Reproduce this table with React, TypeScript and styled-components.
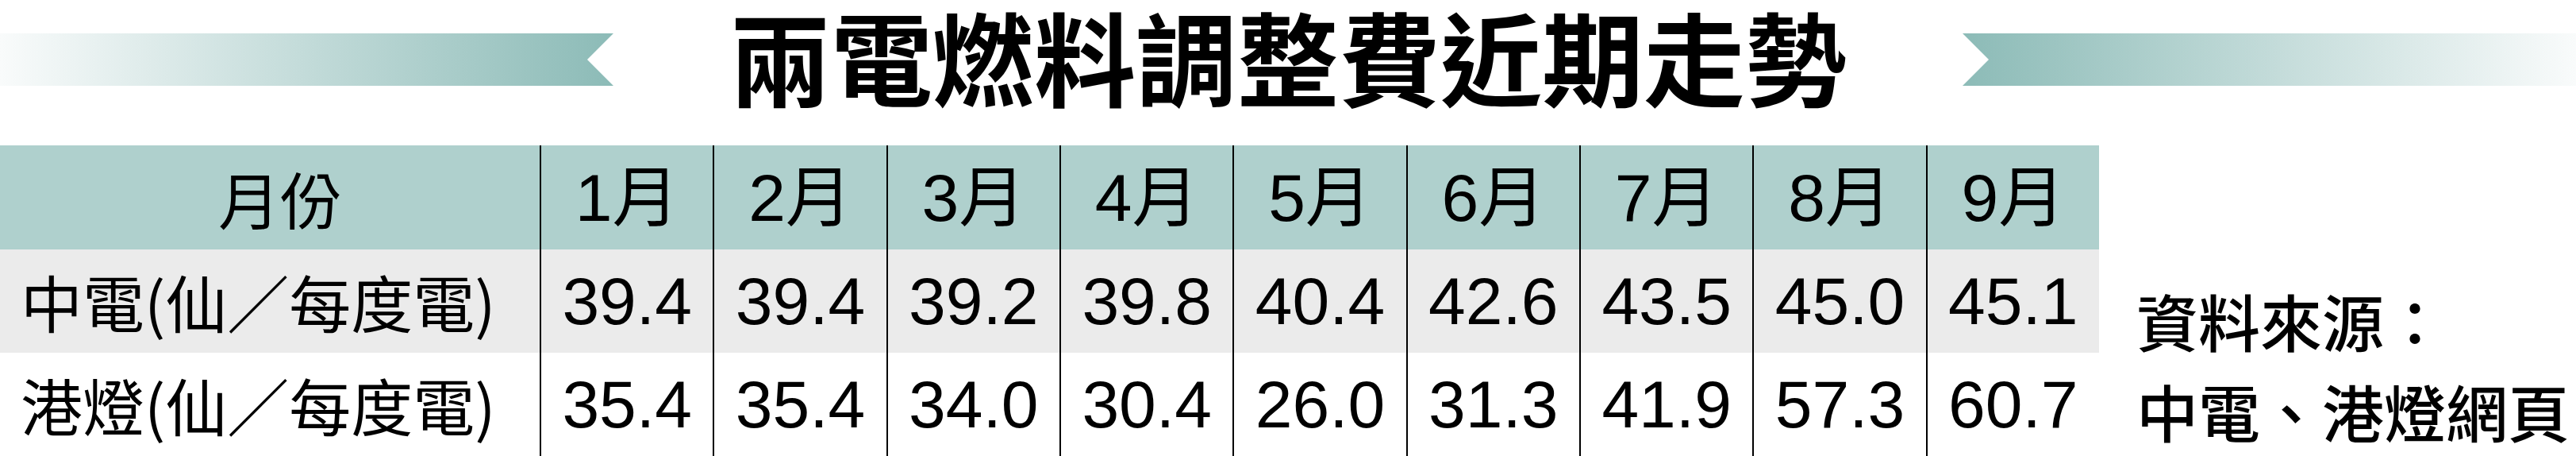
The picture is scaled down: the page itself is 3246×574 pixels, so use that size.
import React from 'react'
import styled, { createGlobalStyle } from 'styled-components'

const CJK = '"Noto Sans CJK TC", "Noto Sans CJK SC", sans-serif'
const NUM = '"Liberation Sans", "Noto Sans CJK TC", sans-serif'

const GlobalStyle = createGlobalStyle`
  html, body {
    margin: 0;
    padding: 0;
    background: #ffffff;
  }
  body {
    font-family: ${CJK};
    color: #000000;
  }
`

const Page = styled('div')`
  width: 3246px;
  height: 574px;
  display: flex;
  flex-direction: column;
`

const TitleRow = styled('div')`
  height: 183px;
  display: grid;
  grid-template-columns: 1fr auto 1fr;
  column-gap: 146px;
  align-items: start;
`

const Ribbon = styled('div')<{ $side: 'left' | 'right' }>`
  margin-top: 42px;
  height: 66px;
  background: ${p =>
    p.$side === 'left'
      ? 'linear-gradient(to right, #f9fbfb 0%, #8cbbb7 100%)'
      : 'linear-gradient(to left, #f9fbfb 0%, #8cbbb7 100%)'};
  clip-path: ${p =>
    p.$side === 'left'
      ? 'polygon(0 0, 100% 0, calc(100% - 33px) 50%, 100% 100%, 0 100%)'
      : 'polygon(0 0, 100% 0, 100% 100%, 0 100%, 33px 50%)'};
`

const Title = styled('h1')`
  margin: 0;
  padding-top: 6px;
  font-family: ${CJK};
  font-size: 128px;
  font-weight: 700;
  line-height: 128px;
  white-space: nowrap;
`

const Body = styled('div')`
  display: flex;
  flex: 1;
`

const Table = styled('div')`
  width: 2645px;
  display: grid;
  grid-template-columns: 680px repeat(9, 1fr);
  grid-template-rows: 131px 130px 130px;
`

const Cell = styled('div')<{ $tone: 'head' | 'grey' | 'white'; $first?: boolean }>`
  display: flex;
  align-items: center;
  justify-content: ${p => (p.$first ? 'flex-start' : 'center')};
  padding-left: ${p => (p.$first ? '26px' : '0')};
  background: ${p =>
    p.$tone === 'head' ? '#afd0cd' : p.$tone === 'grey' ? '#ebebeb' : '#ffffff'};
  border-left: ${p => (p.$first ? 'none' : '2px solid #000000')};
  box-sizing: border-box;
  white-space: nowrap;
  line-height: 1;
`

const HeadLabel = styled('span')`
  width: 100%;
  text-align: center;
  font-family: ${CJK};
  font-size: 78px;
`

const RowLabel = styled('span')`
  font-family: ${CJK};
  font-size: 78px;
`

const Value = styled('span')`
  font-family: ${NUM};
  font-size: 84px;
`

const Source = styled('div')`
  flex: 1;
  padding: 163px 0 0 47px;
  font-family: ${CJK};
  font-size: 78px;
  font-weight: 500;
  line-height: 114px;
  white-space: nowrap;
`

const months = ['1月', '2月', '3月', '4月', '5月', '6月', '7月', '8月', '9月']

const rows = [
  {
    label: '中電(仙／每度電)',
    tone: 'grey' as const,
    values: ['39.4', '39.4', '39.2', '39.8', '40.4', '42.6', '43.5', '45.0', '45.1'],
  },
  {
    label: '港燈(仙／每度電)',
    tone: 'white' as const,
    values: ['35.4', '35.4', '34.0', '30.4', '26.0', '31.3', '41.9', '57.3', '60.7'],
  },
]

const App = () => (
  <>
    <GlobalStyle />
    <Page>
      <TitleRow>
        <Ribbon $side="left" />
        <Title>兩電燃料調整費近期走勢</Title>
        <Ribbon $side="right" />
      </TitleRow>
      <Body>
        <Table>
          <Cell $tone="head" $first>
            <HeadLabel>月份</HeadLabel>
          </Cell>
          {months.map(m => (
            <Cell key={m} $tone="head">
              <Value>{m}</Value>
            </Cell>
          ))}
          {rows.map(row => (
            <React.Fragment key={row.label}>
              <Cell $tone={row.tone} $first>
                <RowLabel>{row.label}</RowLabel>
              </Cell>
              {row.values.map((v, i) => (
                <Cell key={i} $tone={row.tone}>
                  <Value>{v}</Value>
                </Cell>
              ))}
            </React.Fragment>
          ))}
        </Table>
        <Source>
          <div>資料來源：</div>
          <div>中電、港燈網頁</div>
        </Source>
      </Body>
    </Page>
  </>
)

export default App
